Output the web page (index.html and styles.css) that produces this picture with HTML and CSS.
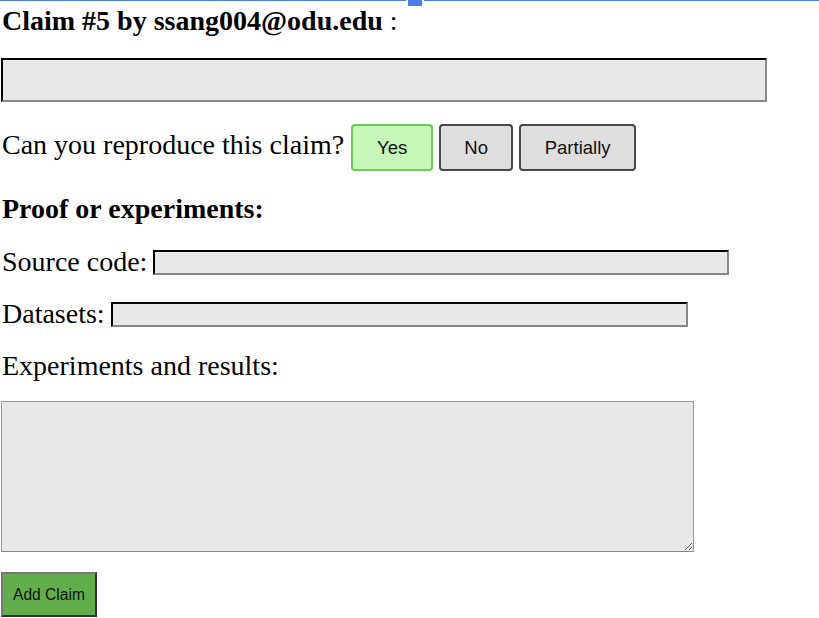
FILE: index.html
```html
<!DOCTYPE html>
<html>
<head>
<meta charset="utf-8">
<link rel="stylesheet" href="styles.css">
</head>
<body>
<div class="topline"><span class="handle"></span></div>
<div class="page">
  <div class="title"><b>Claim #5 by ssang004@odu.edu</b> :</div>
  <input class="claim-input" type="text">
  <div class="question">
    <span>Can you reproduce this claim?</span>
    <button class="choice yes">Yes</button>
    <button class="choice no">No</button>
    <button class="choice partial">Partially</button>
  </div>
  <div class="section">Proof or experiments:</div>
  <div class="field first"><span>Source code:</span><input class="src" type="text"></div>
  <div class="field"><span>Datasets:</span><input class="data" type="text"></div>
  <div class="label">Experiments and results:</div>
  <textarea class="results"></textarea>
  <button class="add">Add Claim</button>
</div>
</body>
</html>
```
FILE: styles.css
```css
html, body { margin: 0; padding: 0; background: #fff; }
body { font-family: "Liberation Serif", "Times New Roman", serif; color: #000; position: relative; }
.topline { position: absolute; left: 0; top: 0; width: 100%; height: 1px; background: #4a7fe8; }
.handle { position: absolute; left: 406px; top: 0; width: 14px; height: 6px; background: #4a7fe8; border-left: 2px solid #fff; border-right: 2px solid #fff; }
.page { padding: 6px 0 0 2px; display: flex; flex-direction: column; align-items: flex-start; }
.title { font-size: 28px; line-height: 30px; }
.title b { font-weight: bold; }
.claim-input { margin: 22px 0 0 -1px; width: 766px; height: 44px; box-sizing: border-box; background: #e8e8e8; border: 2px inset #767676; border-top-color: #333; border-left-color: #333; border-right-color: #888; border-bottom-color: #888; }
.question { display: flex; align-items: center; margin-top: 22px; font-size: 28px; }
.question span { margin-right: 7px; margin-bottom: 5px; }
.choice { font-family: "Liberation Sans", Arial, sans-serif; font-size: 18.5px; height: 47px; background: #dedede; border: 2px solid #4a4a4a; border-radius: 4px; padding: 0; margin-right: 6px; color: #111; }
.choice.yes { background: #c6f7b9; border-color: #6ccb5a; width: 82px; }
.choice.no { width: 74px; }
.choice.partial { width: 117px; }
.section { font-weight: bold; font-size: 28px; margin-top: 23px; line-height: 30px; }
.field { display: flex; align-items: center; font-size: 28px; margin-top: 22px; line-height: 30px; }
.field.first { margin-top: 23px; }
.field span { margin-right: 6px; }
.field input { height: 25px; box-sizing: border-box; background: #e8e8e8; border: 2px inset #555; border-top-color: #333; border-left-color: #333; border-right-color: #888; border-bottom-color: #888; }
.src { width: 576px; }
.data { width: 577px; }
.label { font-size: 28px; margin-top: 22px; line-height: 30px; }
.results { margin: 20px 0 0 -1px; width: 693px; height: 151px; box-sizing: border-box; background: #e8e8e8; border: 1px solid #999; border-bottom-color: #888; resize: both; }
.add { margin: 20px 0 0 -1px; width: 96px; height: 45px; font-family: "Liberation Sans", Arial, sans-serif; font-size: 15.6px; background: #62ae4d; border: 2px solid #555; border-top-color: #777; border-left-color: #777; border-right-color: #333; border-bottom-color: #333; color: #111; padding: 0; }
```
